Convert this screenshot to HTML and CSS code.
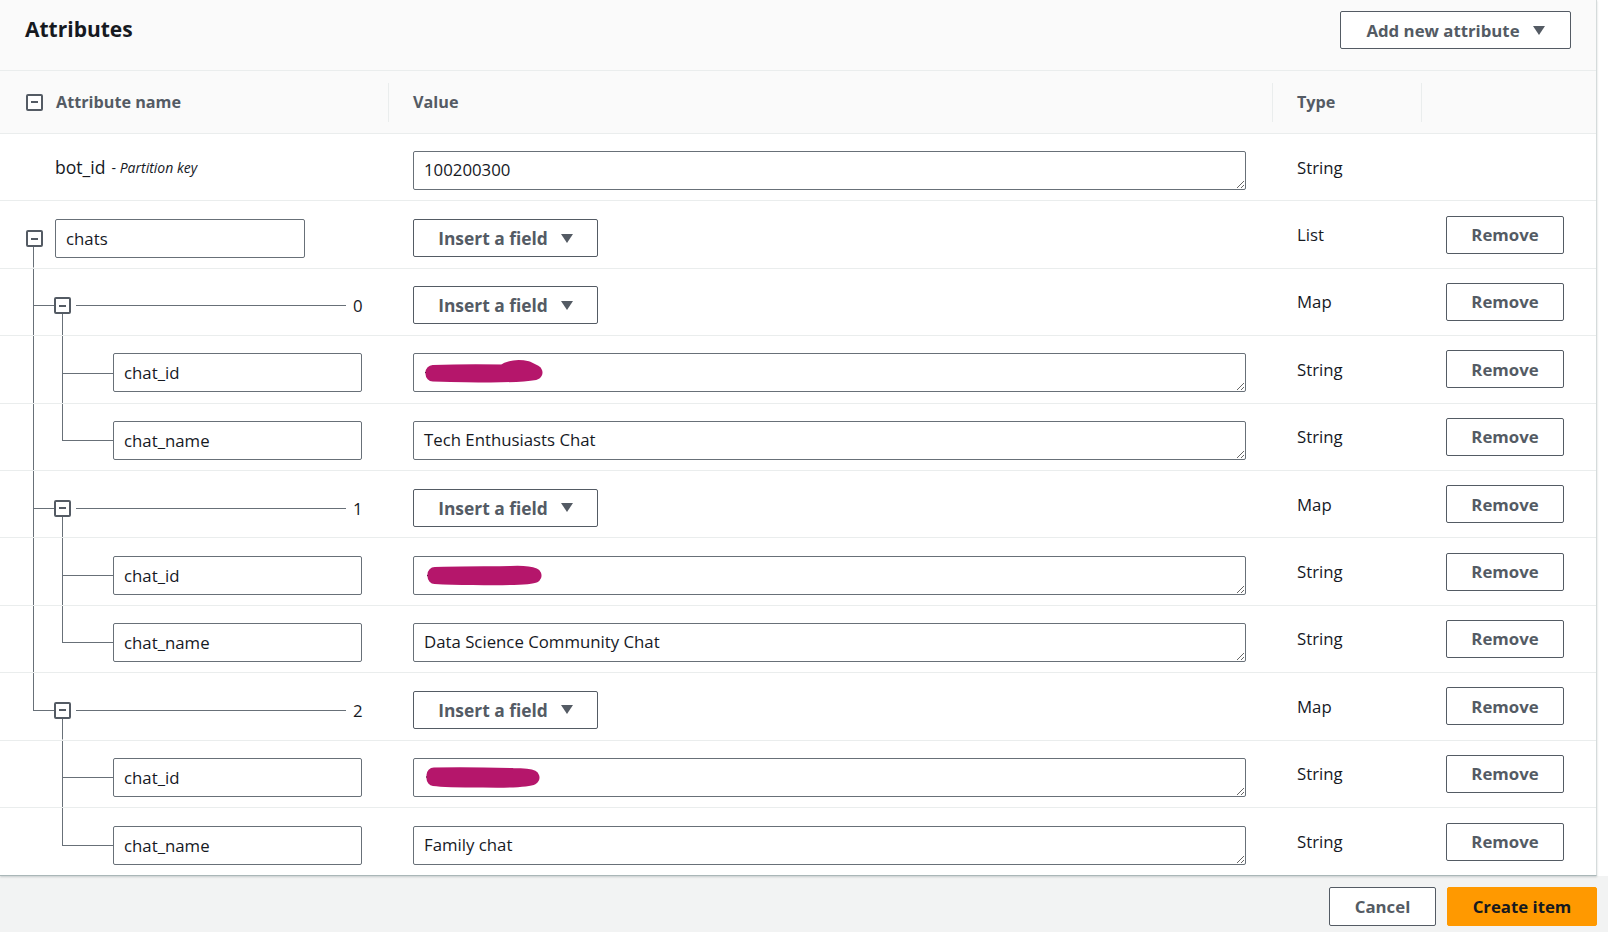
FILE: index.html
```html
<!DOCTYPE html>
<html lang="en">
<head>
<meta charset="utf-8">
<title>Attributes</title>
<link rel="stylesheet" href="styles.css">
</head>
<body>
<div class="sheet">
  <section class="card">
    <header class="card-head">
      <h2 class="title">Attributes</h2>
      <button class="btn btn-add">Add new attribute <svg class="caret" width="12" height="9" viewBox="0 0 12 9"><path d="M0 0H12L6 9Z"/></svg></button>
    </header>

    <div class="table">
      <div class="row head">
        <div class="cell n-head"><span class="toggle"></span>Attribute name</div>
        <div class="cell c-value sep">Value</div>
        <div class="cell c-type sep">Type</div>
        <div class="cell c-act sep"></div>
      </div>

      <div class="row">
        <div class="cell n-plain">bot_id<span class="pk"><span class="pk-dash">-</span> <em>Partition key</em></span></div>
        <div class="cell c-value sh"><textarea class="ta" rows="1">100200300</textarea></div>
        <div class="cell c-type">String</div>
        <div class="cell c-act"></div>
      </div>

      <div class="row">
        <div class="cell n-root"><span class="toggle"></span><input class="ni" value="chats"></div>
        <div class="cell c-value sh"><button class="btn btn-ins">Insert a field <svg class="caret" width="12" height="9" viewBox="0 0 12 9"><path d="M0 0H12L6 9Z"/></svg></button></div>
        <div class="cell c-type">List</div>
        <div class="cell c-act"><button class="btn btn-rm">Remove</button></div>
      </div>

      <div class="row">
        <div class="cell n-idx"><span class="toggle"></span><span class="rule"></span><span class="idx">0</span></div>
        <div class="cell c-value sh"><button class="btn btn-ins">Insert a field <svg class="caret" width="12" height="9" viewBox="0 0 12 9"><path d="M0 0H12L6 9Z"/></svg></button></div>
        <div class="cell c-type">Map</div>
        <div class="cell c-act"><button class="btn btn-rm">Remove</button></div>
      </div>

      <div class="row">
        <div class="cell n-leaf"><input class="ni" value="chat_id"></div>
        <div class="cell c-value sh">
          <div class="vwrap">
            <textarea class="ta" rows="1"></textarea>
            <svg class="redact" width="160" height="39" viewBox="0 0 160 39"><path class="dash" d="M12 19.5H17"/><path class="blob" d="M20 19.5C45 18.5 70 18.5 90 19C98 14 106 13.5 114 15.5L122 19.5C100 23 60 22 20 21Z"/></svg>
          </div>
        </div>
        <div class="cell c-type">String</div>
        <div class="cell c-act"><button class="btn btn-rm">Remove</button></div>
      </div>

      <div class="row">
        <div class="cell n-leaf end"><input class="ni" value="chat_name"></div>
        <div class="cell c-value sh"><textarea class="ta" rows="1">Tech Enthusiasts Chat</textarea></div>
        <div class="cell c-type">String</div>
        <div class="cell c-act"><button class="btn btn-rm">Remove</button></div>
      </div>

      <div class="row">
        <div class="cell n-idx"><span class="toggle"></span><span class="rule"></span><span class="idx">1</span></div>
        <div class="cell c-value sh"><button class="btn btn-ins">Insert a field <svg class="caret" width="12" height="9" viewBox="0 0 12 9"><path d="M0 0H12L6 9Z"/></svg></button></div>
        <div class="cell c-type">Map</div>
        <div class="cell c-act"><button class="btn btn-rm">Remove</button></div>
      </div>

      <div class="row">
        <div class="cell n-leaf"><input class="ni" value="chat_id"></div>
        <div class="cell c-value sh">
          <div class="vwrap">
            <textarea class="ta" rows="1"></textarea>
            <svg class="redact" width="160" height="39" viewBox="0 0 160 39"><path class="dash" d="M14 19.5H19"/><path class="blob" d="M22 18.5C50 17.5 80 18 98 17.5C108 17 116 17.5 121 19.5C116 22 90 22 60 21.5C45 21.5 30 21 22 20.5Z"/></svg>
          </div>
        </div>
        <div class="cell c-type">String</div>
        <div class="cell c-act"><button class="btn btn-rm">Remove</button></div>
      </div>

      <div class="row">
        <div class="cell n-leaf end"><input class="ni" value="chat_name"></div>
        <div class="cell c-value sh"><textarea class="ta" rows="1">Data Science Community Chat</textarea></div>
        <div class="cell c-type">String</div>
        <div class="cell c-act"><button class="btn btn-rm">Remove</button></div>
      </div>

      <div class="row">
        <div class="cell n-idx last"><span class="toggle"></span><span class="rule"></span><span class="idx">2</span></div>
        <div class="cell c-value sh"><button class="btn btn-ins">Insert a field <svg class="caret" width="12" height="9" viewBox="0 0 12 9"><path d="M0 0H12L6 9Z"/></svg></button></div>
        <div class="cell c-type">Map</div>
        <div class="cell c-act"><button class="btn btn-rm">Remove</button></div>
      </div>

      <div class="row">
        <div class="cell n-leaf tail"><input class="ni" value="chat_id"></div>
        <div class="cell c-value sh">
          <div class="vwrap">
            <textarea class="ta" rows="1"></textarea>
            <svg class="redact" width="160" height="39" viewBox="0 0 160 39"><path class="dash" d="M13 19H18"/><path class="blob" d="M21 17C50 16.5 80 17 100 17.5C110 17.5 116 18 119 19.5C114 22 95 22.5 70 22C50 22 32 22 21 20.5Z"/></svg>
          </div>
        </div>
        <div class="cell c-type">String</div>
        <div class="cell c-act"><button class="btn btn-rm">Remove</button></div>
      </div>

      <div class="row">
        <div class="cell n-leaf tail end"><input class="ni" value="chat_name"></div>
        <div class="cell c-value sh"><textarea class="ta" rows="1">Family chat</textarea></div>
        <div class="cell c-type">String</div>
        <div class="cell c-act"><button class="btn btn-rm">Remove</button></div>
      </div>
    </div>
  </section>
</div>

<footer class="foot">
  <button class="btn btn-cancel">Cancel</button>
  <button class="btn btn-primary">Create item</button>
</footer>
</body>
</html>
```

FILE: styles.css
```css
:root {
  --ln: #687078;
  --txt: #16191f;
  --muted: #545b64;
  --rule: #eaeded;
}

* { box-sizing: border-box; }

body {
  margin: 0;
  font-family: "Open Sans", "Noto Sans", sans-serif;
  font-size: 16.8px;
  color: var(--txt);
  background: #f2f3f3;
}

.sheet {
  background: #ffffff;
}

.card {
  width: 1597px;
  background: #ffffff;
  border-right: 1px solid #d5dbdb;
  border-bottom: 1px solid #aab7b8;
  box-shadow: 0 1px 2px 0 rgba(0, 28, 36, 0.18);
}

.card-head {
  height: 71px;
  display: flex;
  justify-content: space-between;
  align-items: flex-start;
  padding: 11px 25px 0 25px;
  background: #fafafa;
  border-bottom: 1px solid var(--rule);
}

.title {
  margin: 0;
  font-size: 21px;
  line-height: 36px;
  font-weight: 700;
  color: var(--txt);
}

.btn {
  height: 38px;
  display: inline-flex;
  align-items: center;
  justify-content: center;
  gap: 13px;
  padding: 0;
  border: 1px solid var(--muted);
  border-radius: 2px;
  background: #ffffff;
  color: var(--muted);
  font-family: inherit;
  font-size: 16.8px;
  font-weight: 700;
}

.caret { fill: var(--muted); flex: none; }

.btn-add { width: 231px; }
.btn-ins { width: 185px; font-size: 17.4px; }
.btn-rm { width: 118px; margin-left: 25px; }
.btn-cancel { width: 107px; height: 39px; }
.btn-primary {
  width: 150px;
  height: 39px;
  background: #ff9900;
  border-color: #ff9900;
  color: var(--txt);
}

/* table */
.row {
  display: grid;
  grid-template-columns: 388px 884px 149px 175px;
  height: 67.4px;
  border-bottom: 1px solid var(--rule);
}
.row:last-child { border-bottom: none; }

.row.head {
  height: 63px;
  background: #fafafa;
  color: var(--muted);
  font-size: 16.2px;
  font-weight: 700;
}

.cell {
  display: flex;
  align-items: center;
  min-width: 0;
}

.sep {
  background: linear-gradient(var(--rule), var(--rule)) 0 50% / 1px 39px no-repeat;
}

.c-value, .c-type { padding-left: 25px; }
.c-value.sh { padding-top: 7px; }

.n-head { padding-left: 26px; gap: 13px; }
.n-plain { padding-left: 55px; font-size: 17.6px; }

.pk { font-size: 14px; margin-left: 6px; }
.pk em { font-style: italic; }

.toggle {
  width: 17px;
  height: 17px;
  flex: none;
  display: grid;
  place-items: center;
  border: 2px solid var(--muted);
  border-radius: 2px;
  background: #ffffff;
}
.toggle::after {
  content: "";
  width: 7px;
  height: 2px;
  background: var(--muted);
}

.ni {
  width: 250px;
  height: 39px;
  padding: 0 10px;
  border: 1px solid var(--ln);
  border-radius: 2px;
  background: #ffffff;
  color: var(--txt);
  font-family: inherit;
  font-size: 16.8px;
}

.ta {
  display: block;
  width: 833px;
  height: 39px;
  padding: 7px 10px;
  border: 1px solid var(--ln);
  border-radius: 2px;
  color: var(--txt);
  font-family: inherit;
  font-size: 16.8px;
  line-height: 22px;
  resize: vertical;
  overflow: hidden;
}

.vwrap { position: relative; }
.redact {
  position: absolute;
  left: 0;
  top: 0;
  pointer-events: none;
}
.redact .blob {
  fill: #b5166b;
  stroke: #b5166b;
  stroke-width: 15;
  stroke-linejoin: round;
  stroke-linecap: round;
}
.redact .dash {
  stroke: #16191f;
  stroke-width: 1.3;
}

/* tree guides */
.n-root {
  padding-left: 26px;
  padding-top: 8px;
  gap: 12px;
  background: linear-gradient(var(--ln), var(--ln)) 33px 100% / 1px 50% no-repeat;
}

.n-idx {
  padding-left: 54px;
  padding-top: 8px;
  background-image:
    linear-gradient(var(--ln), var(--ln)),
    linear-gradient(var(--ln), var(--ln)),
    linear-gradient(var(--ln), var(--ln));
  background-repeat: no-repeat;
  background-position: 33px 0, 33px calc(50% + 4px), 62px 100%;
  background-size: 1px 100%, 21px 1px, 1px calc(50% - 4px);
}
.n-idx.last {
  background-size: 1px calc(50% + 4px), 21px 1px, 1px calc(50% - 4px);
}

.rule {
  width: 270px;
  height: 1px;
  margin-left: 5px;
  background: var(--ln);
}
.idx { margin-left: 7px; }

.n-leaf {
  padding-left: 113px;
  padding-top: 7px;
  background-image:
    linear-gradient(var(--ln), var(--ln)),
    linear-gradient(var(--ln), var(--ln)),
    linear-gradient(var(--ln), var(--ln));
  background-repeat: no-repeat;
  background-position: 33px 0, 62px 0, 62px calc(50% + 4px);
  background-size: 1px 100%, 1px 100%, 51px 1px;
}
.n-leaf .ni { width: 249px; }
.n-leaf.end { background-size: 1px 100%, 1px calc(50% + 4px), 51px 1px; }
.n-leaf.tail { background-size: 0 0, 1px 100%, 51px 1px; }
.n-leaf.tail.end { background-size: 0 0, 1px calc(50% + 4px), 51px 1px; }

/* footer */
.foot {
  display: flex;
  justify-content: flex-end;
  gap: 11px;
  padding: 11px 11px 0 0;
}
```
